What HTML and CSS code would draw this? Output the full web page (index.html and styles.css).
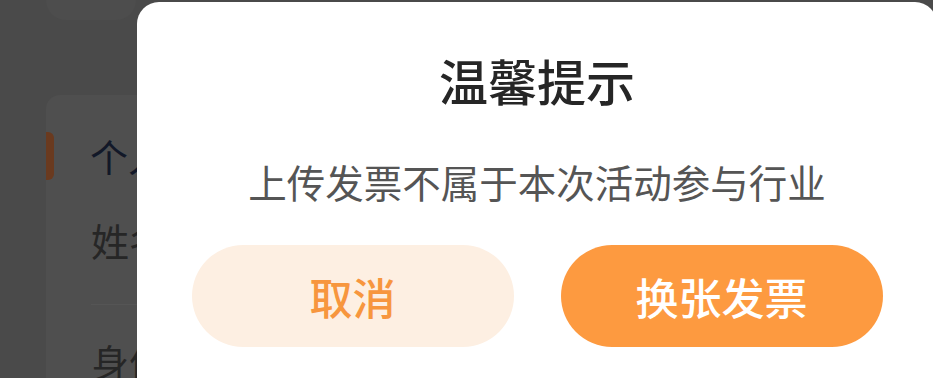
FILE: index.html
```html
<!DOCTYPE html>
<html lang="zh">
<head>
<meta charset="utf-8">
<link rel="stylesheet" href="styles.css">
</head>
<body>
<div class="page">
  <div class="blob"></div>
  <div class="card">
    <div class="section-head">
      <span class="bar"></span>
      <span class="section-title">个人信息</span>
    </div>
    <div class="row">姓名</div>
    <div class="divider"></div>
    <div class="row row2">身份证号</div>
  </div>
</div>
<div class="modal">
  <h1 class="title">温馨提示</h1>
  <p class="msg">上传发票不属于本次活动参与行业</p>
  <div class="actions">
    <button class="btn cancel">取消</button>
    <button class="btn confirm">换张发票</button>
  </div>
</div>
</body>
</html>
```
FILE: styles.css
```css
html, body {
  margin: 0;
  padding: 0;
}
body {
  width: 933px;
  height: 378px;
  overflow: hidden;
  background: #4a4a4a;
  font-family: "Noto Sans CJK SC", "Noto Sans", sans-serif;
  position: relative;
}
.page {
  padding-left: 46px;
}
.blob {
  width: 90px;
  height: 20px;
  background: #4d4d4d;
  border-radius: 0 0 45px 45px;
  margin-bottom: 75px;
}
.card {
  background: #4f4f4f;
  border-radius: 14px 0 0 0;
  height: 283px;
  padding-top: 37px;
}
.section-head {
  display: flex;
  align-items: center;
  height: 48px;
}
.bar {
  width: 8px;
  height: 48px;
  background: #6a3a1f;
  border-radius: 0 6px 6px 0;
}
.section-title {
  margin-left: 36px;
  font-size: 38px;
  color: #121828;
  line-height: 48px;
}
.row {
  margin-left: 45px;
  margin-top: 40px;
  font-size: 38px;
  line-height: 40px;
  color: #262626;
}
.divider {
  margin: 44px 0 0 45px;
  height: 1px;
  background: #555555;
}
.row2 {
  margin-top: 36px;
}
.modal {
  position: absolute;
  left: 137px;
  top: 2px;
  width: 800px;
  bottom: 0;
  background: #ffffff;
  border-radius: 22px 22px 0 0;
  padding-top: 52px;
  box-sizing: border-box;
  display: flex;
  flex-direction: column;
  align-items: center;
}
.title {
  margin: 0;
  font-size: 49px;
  line-height: 52px;
  font-weight: 500;
  color: #262626;
}
.msg {
  margin: 53px 0 0;
  font-size: 38.5px;
  line-height: 44px;
  color: #555555;
}
.actions {
  margin-top: 42px;
  display: flex;
  gap: 47px;
}
.btn {
  width: 322px;
  height: 102px;
  border: none;
  border-radius: 51px;
  font-family: "Noto Sans CJK SC", "Noto Sans", sans-serif;
  font-size: 43px;
  font-weight: 500;
  padding: 0;
}
.cancel {
  background: #fdefe2;
  color: #f7963e;
}
.confirm {
  background: #fd9a40;
  color: #ffffff;
}
```
